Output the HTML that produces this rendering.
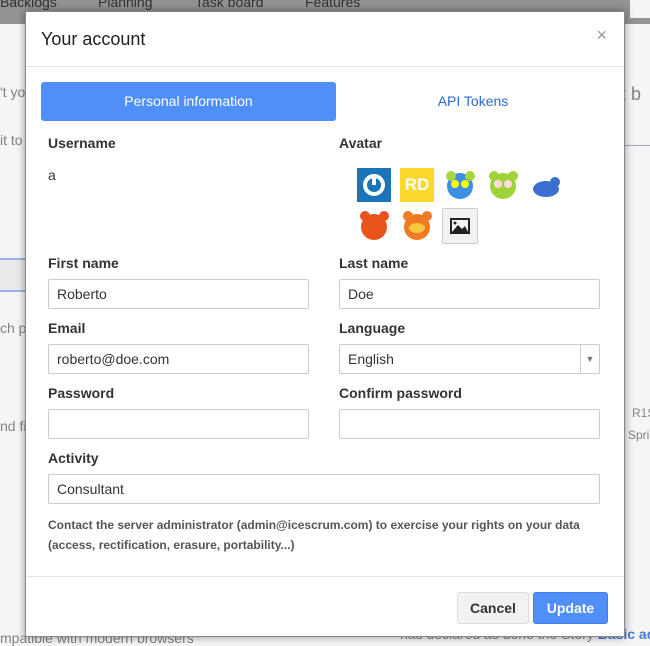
<!DOCTYPE html>
<html><head><style>
body{margin:0;width:650px;height:646px;position:relative;overflow:hidden;font-family:"Liberation Sans",Arial,sans-serif;background:#fff;}
.nav{position:absolute;left:0;top:0;width:650px;height:24px;background:#9a9a9a;color:#333;font-size:14px;}
.nav span{position:absolute;top:-6px}
.bg{position:absolute;color:#888;font-size:14px;white-space:nowrap}
.ov{position:absolute;left:0;top:0;width:650px;height:646px;background:rgba(0,0,0,0.04)}
.modal{position:absolute;left:25px;top:11px;width:598px;height:624px;background:#fff;border:1px solid #888;box-shadow:0 0 8px rgba(0,0,0,.4);}
.title{position:absolute;left:15px;top:17px;font-size:18px;color:#222}
.x{position:absolute;right:17px;top:13px;font-size:18px;color:#999}
.hr{position:absolute;left:0;width:598px;height:1px;background:#e5e5e5}
.tab{position:absolute;top:70px;height:39px;line-height:39px;text-align:center;font-size:14px;border-radius:3px}
.lbl{position:absolute;font-size:14px;font-weight:bold;color:#333}
.inp{position:absolute;height:28px;border:1px solid #ccc;border-radius:2px;font-size:14px;color:#333;line-height:28px;padding-left:8px;box-sizing:content-box}
.av{position:absolute;width:34px;height:34px}
.btn{position:absolute;top:580px;height:30px;line-height:30px;text-align:center;font-size:14px;font-weight:bold;border-radius:3px}
</style></head><body>
<div class="nav"><span style="left:0">Backlogs</span><span style="left:98px">Planning</span><span style="left:195px">Task board</span><span style="left:305px">Features</span></div>
<div style="position:absolute;left:630px;top:0;width:20px;height:18px;background:#fff"></div>
<div class="bg" style="left:0;top:84px">'t yo</div>
<div class="bg" style="left:0;top:132px">it to</div>
<div style="position:absolute;left:0;top:258px;width:25px;height:30px;border-top:2px solid #9bbcf0;border-bottom:2px solid #9bbcf0;background:#f4f4f4"></div>
<div class="bg" style="left:0;top:320px">ch pr</div>
<div class="bg" style="left:0;top:418px">nd fi</div>
<div class="bg" style="left:0;top:630px">mpatible with modern browsers</div>
<div class="bg" style="left:612px;top:84px;font-size:18px">ct b</div>
<div style="position:absolute;left:623px;top:145px;width:27px;height:1px;background:#aab"></div>
<div class="bg" style="left:632px;top:406px;font-size:12px">R1S</div>
<div class="bg" style="left:628px;top:428px;font-size:12px">Spri</div>
<div class="bg" style="left:400px;top:626px;">has declared as done the Story <b style="color:#4a7fd4">Basic ac</b></div>
<div class="ov"></div>
<div class="modal">
<div class="title">Your account</div><div class="x">×</div>
<div class="hr" style="top:54px"></div>
<div class="tab" style="left:15px;width:295px;background:#4f8ff7;color:#fff">Personal information</div>
<div class="tab" style="left:312px;width:270px;color:#2a6ad8">API Tokens</div>
<div class="lbl" style="left:22px;top:123px">Username</div>
<div style="position:absolute;left:22px;top:155px;font-size:14px;color:#333">a</div>
<div class="lbl" style="left:313px;top:123px">Avatar</div>
<div class="av" style="left:331px;top:156px;background:#1a75b8"><svg width="34" height="34"><circle cx="17" cy="17" r="9" fill="none" stroke="#fff" stroke-width="4"/><rect x="15" y="6" width="4" height="11" fill="#fff"/></svg></div>
<div class="av" style="left:374px;top:156px;background:#fbd92a;color:#fff;font-weight:bold;font-size:17px;line-height:34px;text-align:center">RD</div>
<div class="av" style="left:417px;top:156px"><svg width="34" height="34"><circle cx="17" cy="18" r="13" fill="#3d8fe6"/><circle cx="8" cy="8" r="5" fill="#a6d63a"/><circle cx="27" cy="8" r="5" fill="#a6d63a"/><circle cx="12" cy="16" r="4" fill="#ff0"/><circle cx="22" cy="16" r="4" fill="#ff0"/></svg></div>
<div class="av" style="left:460px;top:156px"><svg width="34" height="34"><circle cx="17" cy="18" r="13" fill="#9cd43a"/><circle cx="8" cy="8" r="5" fill="#9cd43a"/><circle cx="27" cy="8" r="5" fill="#9cd43a"/><circle cx="12" cy="16" r="4" fill="#fdd"/><circle cx="22" cy="16" r="4" fill="#fdd"/></svg></div>
<div class="av" style="left:503px;top:156px"><svg width="34" height="34"><ellipse cx="17" cy="21" rx="13" ry="8" fill="#3a6fd0"/><circle cx="26" cy="14" r="5" fill="#3a6fd0"/></svg></div>
<div class="av" style="left:331px;top:196px"><svg width="34" height="34"><circle cx="17" cy="19" r="13" fill="#e8531b"/><circle cx="8" cy="8" r="5" fill="#e8531b"/><circle cx="27" cy="8" r="5" fill="#e8531b"/></svg></div>
<div class="av" style="left:374px;top:196px"><svg width="34" height="34"><circle cx="17" cy="19" r="13" fill="#f07a22"/><circle cx="8" cy="8" r="5" fill="#f07a22"/><circle cx="27" cy="8" r="5" fill="#f07a22"/><ellipse cx="17" cy="20" rx="8" ry="5" fill="#f8c840"/></svg></div>
<div class="av" style="left:416px;top:196px;background:#f2f2f2;border:1px solid #ccc;border-radius:2px"><svg width="34" height="34"><rect x="8" y="10" width="18" height="14" fill="none" stroke="#222" stroke-width="2"/><path d="M9 23 L15 16 L19 20 L22 17 L25 23Z" fill="#222"/><circle cx="12" cy="14" r="1.5" fill="#222"/></svg></div>
<div class="lbl" style="left:22px;top:243px">First name</div>
<div class="lbl" style="left:313px;top:243px">Last name</div>
<div class="inp" style="left:22px;top:267px;width:251px">Roberto</div>
<div class="inp" style="left:313px;top:267px;width:251px">Doe</div>
<div class="lbl" style="left:22px;top:308px">Email</div>
<div class="lbl" style="left:313px;top:308px">Language</div>
<div class="inp" style="left:22px;top:332px;width:251px">roberto@doe.com</div>
<div class="inp" style="left:313px;top:332px;width:251px">English<span style="position:absolute;right:0;top:0;width:18px;border-left:1px solid #ccc;height:28px;text-align:center;font-size:9px;color:#777">▼</span></div>
<div class="lbl" style="left:22px;top:373px">Password</div>
<div class="lbl" style="left:313px;top:373px">Confirm password</div>
<div class="inp" style="left:22px;top:397px;width:251px"></div>
<div class="inp" style="left:313px;top:397px;width:251px"></div>
<div class="lbl" style="left:22px;top:438px">Activity</div>
<div class="inp" style="left:22px;top:462px;width:542px">Consultant</div>
<div style="position:absolute;left:22px;top:503px;width:540px;font-size:12px;font-weight:bold;color:#555;line-height:20px">Contact the server administrator (admin@icescrum.com) to exercise your rights on your data (access, rectification, erasure, portability...)</div>
<div class="hr" style="top:564px"></div>
<div class="btn" style="left:431px;width:70px;background:#f2f2f2;border:1px solid #ddd;color:#333">Cancel</div>
<div class="btn" style="left:507px;width:73px;background:#4f8ff7;border:1px solid #3f7fe7;color:#fff">Update</div>
</div>
</body></html>
